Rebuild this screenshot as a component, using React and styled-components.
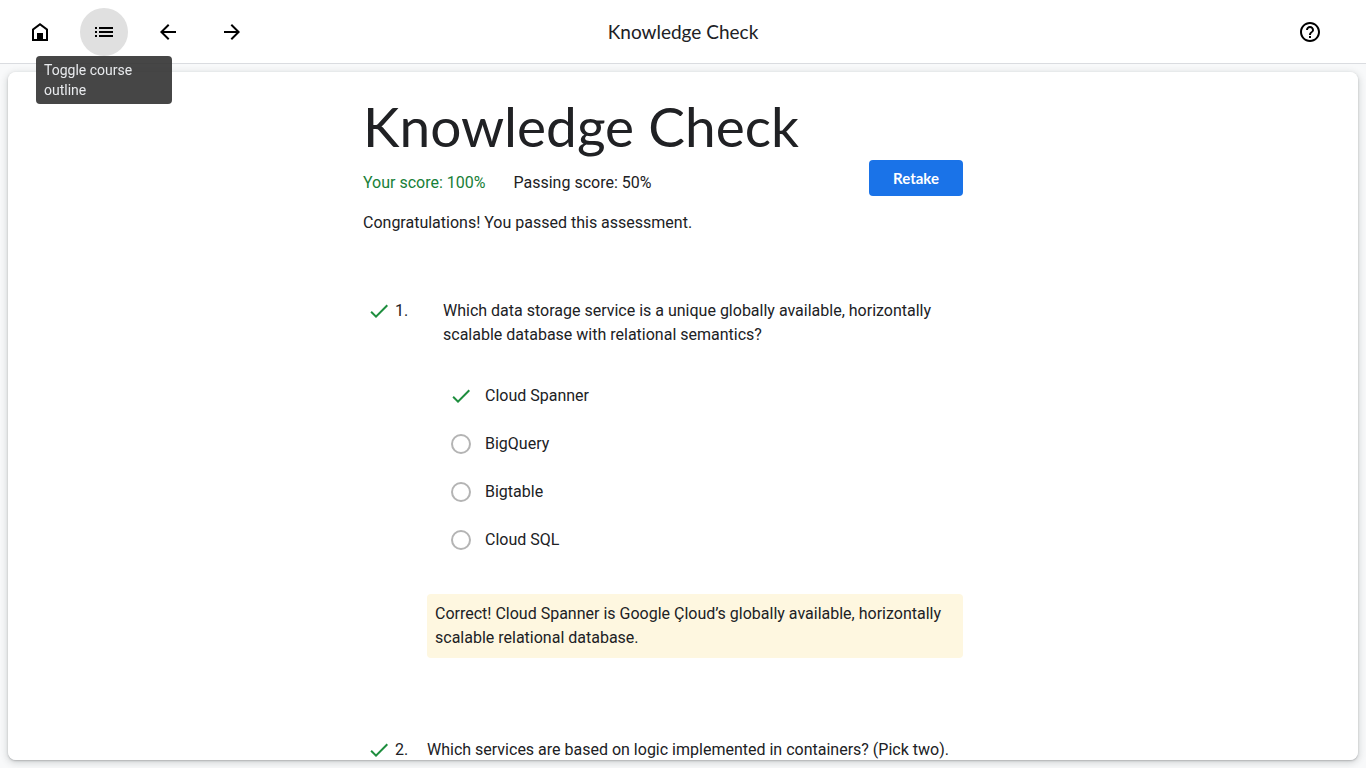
import React from "react";
import styled, { createGlobalStyle } from "styled-components";

const GlobalStyle = createGlobalStyle`
  *, *::before, *::after { box-sizing: border-box; }
  body {
    margin: 0;
    background: #f8f9fa;
    color: #202124;
    font: 400 16px/24px Roboto, "Liberation Sans", sans-serif;
  }
`;

const Page = styled.div`
  display: flex;
  flex-direction: column;
  height: 100vh;
`;

const TopBar = styled.header`
  display: grid;
  grid-template-columns: 1fr auto 1fr;
  align-items: center;
  flex: none;
  height: 64px;
  padding: 0 16px;
  background: #fff;
  border-bottom: 1px solid #dadce0;
`;

const NavGroup = styled.nav`
  display: flex;
  gap: 16px;
`;

const IconSlot = styled.div`
  position: relative;
  display: flex;
`;

const IconButton = styled.button`
  display: grid;
  place-items: center;
  width: 48px;
  height: 48px;
  padding: 0;
  border: 0;
  border-radius: 50%;
  background: ${(p) => (p.$active ? "#e0e0e0" : "transparent")};
  color: #000;
  cursor: pointer;
`;

const EndGroup = styled.div`
  display: flex;
  justify-content: flex-end;
  padding-right: 16px;
`;

const BarTitle = styled.div`
  font: 400 19px/24px Lato, "Open Sans", sans-serif;
`;

const Tooltip = styled.div`
  position: absolute;
  z-index: 2;
  top: 100%;
  left: 50%;
  width: 136px;
  padding: 4px 8px;
  transform: translateX(-50%);
  border-radius: 4px;
  background: rgba(50, 50, 50, 0.9);
  color: #e8eaed;
  font-size: 14px;
  line-height: 20px;
`;

const Card = styled.main`
  flex: 1;
  min-height: 0;
  margin: 8px;
  padding: 22px 24px;
  overflow-y: auto;
  scrollbar-width: none;
  border-radius: 8px;
  background: #fff;
  box-shadow: 0 1px 2px rgba(60, 64, 67, 0.3), 0 2px 6px 2px rgba(60, 64, 67, 0.15);
`;

const Column = styled.div`
  max-width: 640px;
  margin: 0 auto;
  padding-right: 40px;
`;

const Heading = styled.h1`
  margin: 0 0 2px;
  font: 400 55px/64px Lato, "Open Sans", sans-serif;
`;

const ScoreRow = styled.div`
  display: flex;
  justify-content: space-between;
  align-items: flex-start;
`;

const Scores = styled.div`
  display: flex;
  gap: 28px;
  padding-top: 11px;
`;

const Score = styled.span`
  color: ${(p) => (p.$passed ? "#188038" : "inherit")};
`;

const RetakeButton = styled.button`
  height: 36px;
  padding: 0 24px;
  border: 0;
  border-radius: 4px;
  background: #1a73e8;
  color: #fff;
  font: 700 15px/20px Lato, "Open Sans", sans-serif;
  cursor: pointer;
`;

const Message = styled.p`
  margin: 15px 0 64px;
`;

const QuestionList = styled.ol`
  display: grid;
  gap: 80px;
  margin: 0;
  padding: 0;
  list-style: none;
`;

const Question = styled.li`
  display: grid;
  grid-template-columns: 32px 32px 1fr;
`;

const Mark = styled.span`
  display: grid;
  place-items: center;
  height: 24px;
  color: #1e8e3e;
`;

const Body = styled.div`
  min-width: 0;
`;

const Answers = styled.fieldset`
  margin: 0;
  padding: 0 ${(p) => (p.$inset ? 16 : 0)}px;
  border: 0;
`;

const Prompt = styled.legend`
  margin-bottom: 25px;
  padding: 0;
`;

const Answer = styled.label`
  display: flex;
  align-items: center;
  gap: 6px;
  height: 48px;
`;

const Control = styled.span`
  display: grid;
  place-items: center;
  width: 36px;
  height: 36px;
  color: #1e8e3e;

  > * {
    grid-area: 1 / 1;
  }
`;

const Radio = styled.input`
  width: 20px;
  height: 20px;
  margin: 0;
  appearance: none;
  border: 2px solid #b4b4b4;
  border-radius: 50%;

  &:checked {
    border-color: transparent;
  }
`;

const Feedback = styled.p`
  margin: 30px 0 0;
  padding: 8px;
  border-radius: 4px;
  background: #fef7e0;
`;

const icons = {
  home: "M4 21V9l8-6 8 6v12H4zM6 19h3v-6h6v6h3v-9l-6-4.5L6 10v9z",
  list: "M3 13h2v-2H3v2zm0 4h2v-2H3v2zm0-8h2V7H3v2zm4 4h14v-2H7v2zm0 4h14v-2H7v2zM7 7v2h14V7H7z",
  back: "M20 11H7.83l5.59-5.59L12 4l-8 8 8 8 1.41-1.41L7.83 13H20v-2z",
  forward: "M12 4l-1.41 1.41L16.17 11H4v2h12.17l-5.58 5.59L12 20l8-8-8-8z",
  help: "M11 18h2v-2h-2v2zm1-16C6.48 2 2 6.48 2 12s4.48 10 10 10 10-4.48 10-10S17.52 2 12 2zm0 18c-4.41 0-8-3.59-8-8s3.59-8 8-8 8 3.59 8 8-3.59 8-8 8zm0-14c-2.21 0-4 1.79-4 4h2c0-1.1.9-2 2-2s2 .9 2 2c0 2-3 1.75-3 5h2c0-2.25 3-2.5 3-5 0-2.21-1.79-4-4-4z",
  check: "M9 16.17L4.83 12l-1.42 1.41L9 19 21 7l-1.41-1.41z",
};

function Icon({ name }) {
  return (
    <svg width="24" height="24" viewBox="0 0 24 24" fill="currentColor" fillRule="evenodd" aria-hidden="true">
      <path d={icons[name]} />
    </svg>
  );
}

const navItems = [
  { icon: "home", label: "Home" },
  { icon: "list", label: "Toggle course outline", active: true },
  { icon: "back", label: "Previous" },
  { icon: "forward", label: "Next" },
];

const questions = [
  {
    prompt:
      "Which data storage service is a unique globally available, horizontally scalable database with relational semantics?",
    inset: true,
    answers: ["Cloud Spanner", "BigQuery", "Bigtable", "Cloud SQL"],
    chosen: "Cloud Spanner",
    feedback:
      "Correct! Cloud Spanner is Google Çloud’s globally available, horizontally scalable relational database.",
  },
  {
    prompt: "Which services are based on logic implemented in containers? (Pick two).",
    answers: [],
  },
];

export default function App() {
  return (
    <Page>
      <GlobalStyle />
      <TopBar>
        <NavGroup>
          {navItems.map((item) => (
            <IconSlot key={item.icon}>
              <IconButton type="button" aria-label={item.label} $active={item.active}>
                <Icon name={item.icon} />
              </IconButton>
              {item.active && <Tooltip role="tooltip">{item.label}</Tooltip>}
            </IconSlot>
          ))}
        </NavGroup>
        <BarTitle>Knowledge Check</BarTitle>
        <EndGroup>
          <IconButton type="button" aria-label="Help">
            <Icon name="help" />
          </IconButton>
        </EndGroup>
      </TopBar>
      <Card>
        <Column>
          <Heading>Knowledge Check</Heading>
          <ScoreRow>
            <Scores>
              <Score $passed>Your score: 100%</Score>
              <Score>Passing score: 50%</Score>
            </Scores>
            <RetakeButton type="button">Retake</RetakeButton>
          </ScoreRow>
          <Message>Congratulations! You passed this assessment.</Message>
          <QuestionList>
            {questions.map((q, i) => (
              <Question key={q.prompt}>
                <Mark>
                  <Icon name="check" />
                </Mark>
                <span>{i + 1}.</span>
                <Body>
                  <Answers $inset={q.inset}>
                    <Prompt>{q.prompt}</Prompt>
                    {q.answers.map((text) => (
                      <Answer key={text}>
                        <Control>
                          <Radio type="radio" name={`question-${i}`} defaultChecked={text === q.chosen} />
                          {text === q.chosen && <Icon name="check" />}
                        </Control>
                        <span>{text}</span>
                      </Answer>
                    ))}
                  </Answers>
                  {q.feedback && <Feedback>{q.feedback}</Feedback>}
                </Body>
              </Question>
            ))}
          </QuestionList>
        </Column>
      </Card>
    </Page>
  );
}
